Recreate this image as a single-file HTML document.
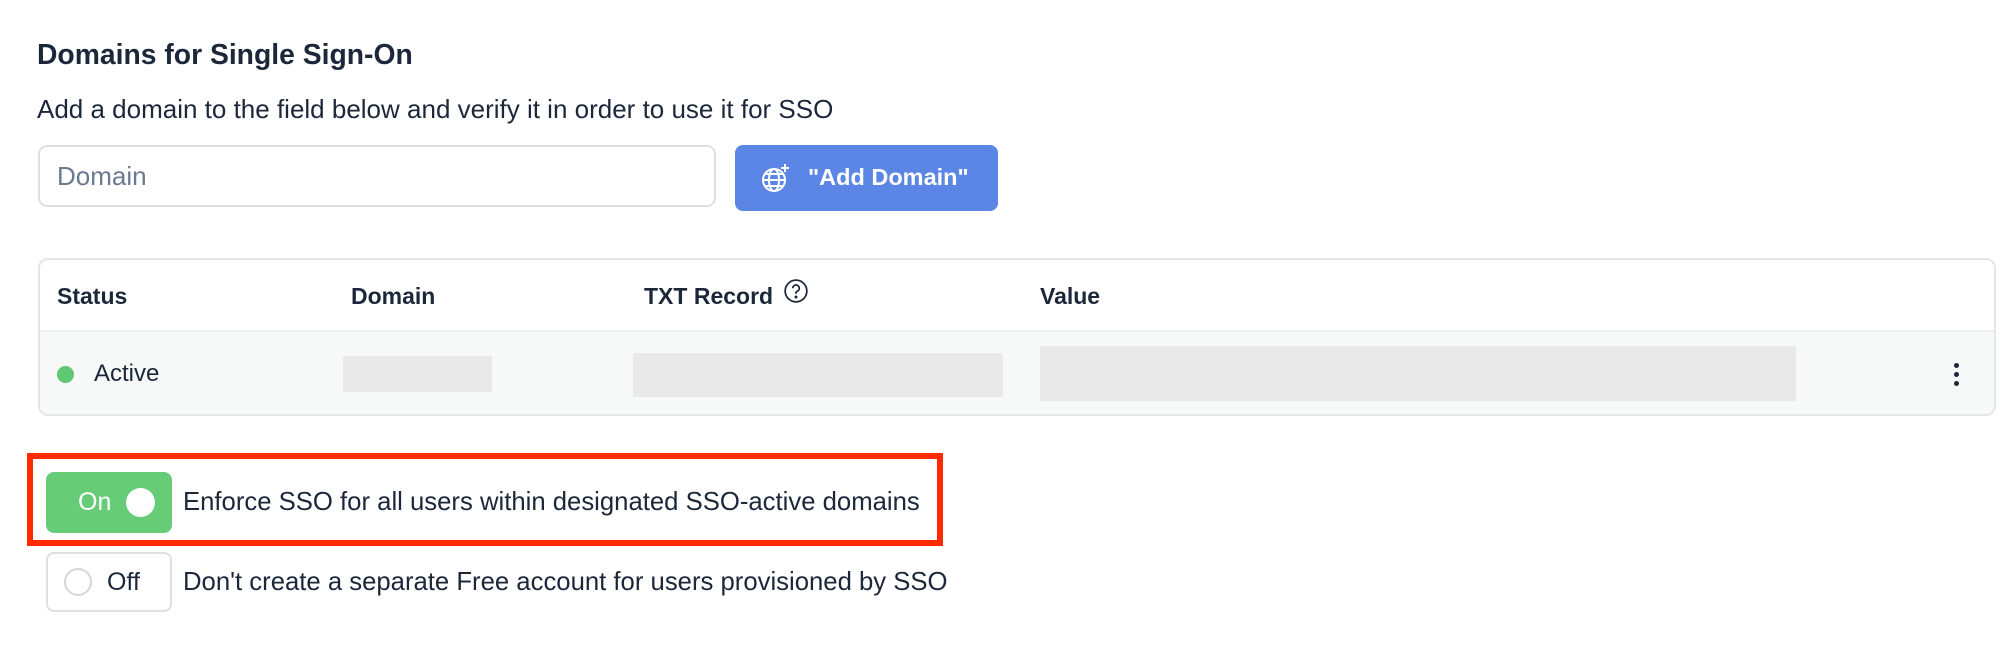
<!DOCTYPE html>
<html><head><meta charset="utf-8"><style>
*{box-sizing:border-box;margin:0;padding:0}
body{width:2000px;height:659px;background:#fff;font-family:"Liberation Sans",sans-serif;color:#1c273a;position:relative;overflow:hidden}
.a{position:absolute;white-space:nowrap}
</style></head><body>
<div class="a" style="left:37px;top:37px;font-size:28.3px;font-weight:bold;line-height:34px">Domains for Single Sign-On</div>
<div class="a" style="left:37px;top:94px;font-size:26px;line-height:30px">Add a domain to the field below and verify it in order to use it for SSO</div>
<div class="a" style="left:38px;top:145px;width:678px;height:62px;border:2px solid #dcdfe4;border-radius:9px"></div>
<div class="a" style="left:57px;top:161px;font-size:26px;line-height:30px;color:#6b7a90">Domain</div>
<div class="a" style="left:735px;top:145px;width:263px;height:66px;background:#5b86e5;border-radius:8px"></div>
<svg class="a" style="left:760px;top:162px" width="32" height="32" viewBox="0 0 32 32" fill="none" stroke="#fff" stroke-width="2"><circle cx="14" cy="18" r="11"/><ellipse cx="14" cy="18" rx="5" ry="11"/><path d="M3 18h22M5 12h18M5 24h18"/><path d="M25 2v8M21 6h8"/></svg>
<div class="a" style="left:808px;top:163px;font-size:23.5px;font-weight:bold;color:#fff;line-height:28px">"Add Domain"</div>
<div class="a" style="left:38px;top:258px;width:1958px;height:158px;border:2px solid #e3e5ea;border-radius:10px;overflow:hidden">
<div style="height:72px;border-bottom:2px solid #eceef0;background:#fff"></div>
<div style="height:84px;background:#f7f8f8"></div>
</div>
<div class="a" style="left:57px;top:282px;font-size:23px;font-weight:bold;line-height:28px">Status</div>
<div class="a" style="left:351px;top:282px;font-size:23px;font-weight:bold;line-height:28px">Domain</div>
<div class="a" style="left:644px;top:282px;font-size:23px;font-weight:bold;line-height:28px">TXT Record</div>
<svg class="a" style="left:783px;top:278px" width="26" height="26" viewBox="0 0 24 24" fill="none" stroke="#1c273a" stroke-width="1.6"><circle cx="12" cy="12" r="10"/><path d="M9 9.5a3 3 0 1 1 4 2.8c-.8.4-1 1-1 1.7v.5"/><circle cx="12" cy="17.5" r=".6" fill="#1c273a"/></svg>
<div class="a" style="left:1040px;top:282px;font-size:23px;font-weight:bold;line-height:28px">Value</div>
<div class="a" style="left:57px;top:366px;width:17px;height:17px;border-radius:50%;background:#5fc870"></div>
<div class="a" style="left:94px;top:360px;font-size:24px;line-height:28px">Active</div>
<div class="a" style="left:343px;top:356px;width:149px;height:36px;background:#e9e9e9"></div>
<div class="a" style="left:633px;top:353px;width:370px;height:44px;background:#e9e9e9"></div>
<div class="a" style="left:1040px;top:346px;width:756px;height:55px;background:#e9e9e9"></div>
<div class="a" style="left:1954px;top:363px;width:5px;height:5px;border-radius:50%;background:#1c273a"></div>
<div class="a" style="left:1954px;top:372px;width:5px;height:5px;border-radius:50%;background:#1c273a"></div>
<div class="a" style="left:1954px;top:381px;width:5px;height:5px;border-radius:50%;background:#1c273a"></div>
<div class="a" style="left:27px;top:453px;width:916px;height:93px;border:6px solid #ff2a00"></div>
<div class="a" style="left:46px;top:472px;width:126px;height:61px;background:#66cc77;border-radius:8px"></div>
<div class="a" style="left:78px;top:487px;font-size:25px;color:#fff;line-height:30px">On</div>
<div class="a" style="left:126px;top:488px;width:29px;height:29px;border-radius:50%;background:#fff"></div>
<div class="a" style="left:183px;top:487px;font-size:25.7px;line-height:30px">Enforce SSO for all users within designated SSO-active domains</div>
<div class="a" style="left:46px;top:552px;width:126px;height:60px;border:2px solid #dcdfe4;border-radius:8px"></div>
<div class="a" style="left:64px;top:568px;width:28px;height:28px;border-radius:50%;border:2px solid #d3d6db"></div>
<div class="a" style="left:107px;top:567px;font-size:25px;line-height:30px">Off</div>
<div class="a" style="left:183px;top:567px;font-size:25.7px;line-height:30px">Don't create a separate Free account for users provisioned by SSO</div>
</body></html>
